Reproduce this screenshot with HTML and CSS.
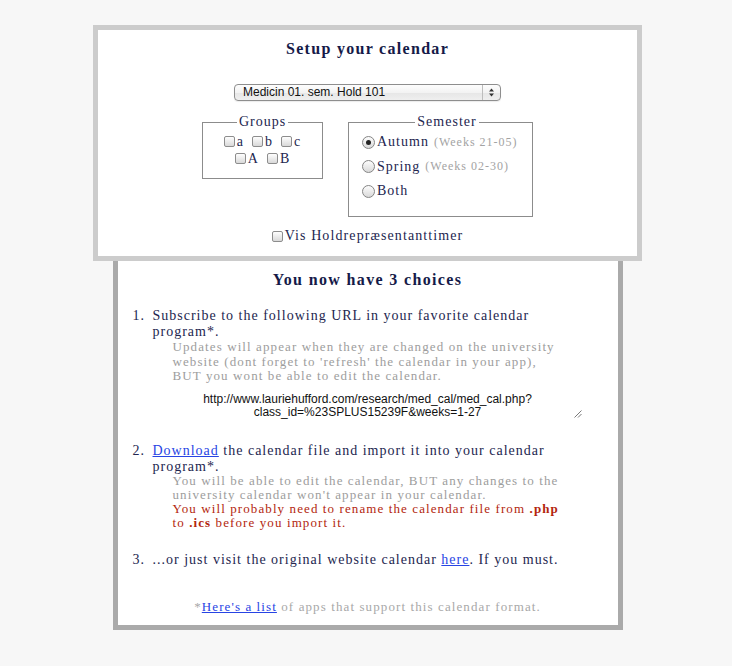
FILE: index.html
```html
<!DOCTYPE html>
<html>
<head>
<meta charset="utf-8">
<title>Setup your calendar</title>
<link rel="stylesheet" href="styles.css">
</head>
<body>
<div class="page">
  <section class="setup">
    <h1 class="setup-title">Setup your calendar</h1>
    <div class="select-row">
      <div class="select">
        <span class="select-text">Medicin 01. sem. Hold 101</span>
        <span class="select-arrows"><svg width="7" height="11" viewBox="0 0 7 11"><path d="M3.5 1.5 L6 4.5 H1 Z" fill="#333"/><path d="M3.5 9.5 L6 6.5 H1 Z" fill="#333"/></svg></span>
      </div>
    </div>
    <div class="fieldsets">
      <fieldset class="box groups">
        <legend>Groups</legend>
        <div class="group-row">
          <label class="opt"><span class="cb"></span>a</label>
          <label class="opt"><span class="cb"></span>b</label>
          <label class="opt"><span class="cb"></span>c</label>
        </div>
        <div class="group-row">
          <label class="opt"><span class="cb"></span>A</label>
          <label class="opt"><span class="cb"></span>B</label>
        </div>
      </fieldset>
      <fieldset class="box semester">
        <legend>Semester</legend>
        <label class="radio-row"><span class="rb rb-on"></span>Autumn<span class="weeks">(Weeks 21-05)</span></label>
        <label class="radio-row"><span class="rb"></span>Spring<span class="weeks">(Weeks 02-30)</span></label>
        <label class="radio-row"><span class="rb"></span>Both</label>
      </fieldset>
    </div>
    <div class="vis-row"><label class="opt"><span class="cb"></span>Vis Holdrepræsentanttimer</label></div>
  </section>
  <section class="choices">
    <h2 class="choices-title">You now have 3 choices</h2>
    <ol class="steps">
      <li class="step">
        <span class="num">1.</span>
        <div class="step-body">
          <p class="step-main">Subscribe to the following URL in your favorite calendar<br>program*.</p>
          <p class="note note-wide">Updates will appear when they are changed on the university<br>website (dont forget to 'refresh' the calendar in your app),<br>BUT you wont be able to edit the calendar.</p>
          <div class="url-box">http://www.lauriehufford.com/research/med_cal/med_cal.php?<br>class_id=%23SPLUS15239F&amp;weeks=1-27<svg class="grip" width="8" height="8" viewBox="0 0 8 8"><path d="M7.5 0.5 L0.5 7.5 M7.5 4 L4 7.5" stroke="#7a7a7a" stroke-width="1" fill="none"/></svg></div>
        </div>
      </li>
      <li class="step">
        <span class="num">2.</span>
        <div class="step-body">
          <p class="step-main"><a href="#">Download</a> the calendar file and import it into your calendar<br>program*.</p>
          <p class="note">You will be able to edit the calendar, BUT any changes to the<br>university calendar won't appear in your calendar.<br><span class="warn">You will probably need to rename the calendar file from <b>.php</b><br>to <b>.ics</b> before you import it.</span></p>
        </div>
      </li>
      <li class="step">
        <span class="num">3.</span>
        <div class="step-body">
          <p class="step-main">...or just visit the original website calendar <a href="#">here</a>. If you must.</p>
        </div>
      </li>
    </ol>
    <p class="footnote">*<a href="#">Here's a list</a> of apps that support this calendar format.</p>
  </section>
</div>
</body>
</html>
```
FILE: styles.css
```css
* {
  box-sizing: border-box;
}

body {
  margin: 0;
  background: #f7f7f7;
  font-family: "Liberation Serif", "Times New Roman", serif;
  color: #23264f;
}

a {
  color: #2744e4;
  text-decoration: underline;
}

.page {
  display: flex;
  flex-direction: column;
  align-items: center;
  padding: 25px 0 0 3px;
}

/* ---------- setup box ---------- */
.setup {
  width: 549px;
  border: 5px solid #cccccc;
  background: #ffffff;
  padding: 9px 0 12px;
  position: relative;
  z-index: 1;
}

.setup-title {
  margin: 0;
  font-size: 16px;
  line-height: 20px;
  font-weight: bold;
  letter-spacing: 1.3px;
  text-align: center;
  color: #151a48;
}

.select-row {
  display: flex;
  justify-content: center;
  margin-top: 25px;
}

.select {
  width: 267px;
  height: 17px;
  border: 1px solid #8e8e8e;
  border-radius: 4px;
  background: linear-gradient(#fdfdfd, #f3f3f3 50%, #e6e6e6 51%, #efefef);
  box-shadow: 0 1px 1px rgba(0, 0, 0, 0.08);
  display: flex;
  align-items: center;
  font-family: "Liberation Sans", Arial, sans-serif;
  font-size: 12px;
  color: #111;
}

.select-text {
  flex: 1;
  padding-left: 8px;
  line-height: 15px;
}

.select-arrows {
  width: 18px;
  height: 100%;
  border-left: 1px solid #bdbdbd;
  display: flex;
  align-items: center;
  justify-content: center;
}

.fieldsets {
  display: flex;
  justify-content: center;
  align-items: flex-start;
  gap: 25px;
  margin-top: 13px;
}

.box {
  margin: 0;
  border: 1px solid #8c8c8c;
  min-width: 0;
}

.box legend {
  margin: 0 auto;
  padding: 0 2px;
  font-size: 14px;
  line-height: 16px;
  letter-spacing: 1px;
  color: #23264f;
}

.groups {
  width: 121px;
  padding: 3px 0 11px;
}

.semester {
  width: 185px;
  padding: 0 0 12.5px 13px;
}

.group-row {
  display: flex;
  justify-content: center;
  gap: 8px;
  font-size: 14px;
  line-height: 17px;
  letter-spacing: 1px;
}

.opt {
  display: inline-flex;
  align-items: center;
}

.cb {
  flex: none;
  width: 11px;
  height: 11px;
  margin-right: 2px;
  border: 1px solid #8d8d8d;
  border-radius: 2px;
  background: linear-gradient(#fefefe, #d9d9d9);
}

.radio-row {
  display: flex;
  align-items: center;
  height: 24.5px;
  font-size: 14px;
  letter-spacing: 1px;
  white-space: nowrap;
}

.rb {
  flex: none;
  position: relative;
  width: 13px;
  height: 13px;
  margin-right: 2px;
  border: 1px solid #858585;
  border-radius: 50%;
  background: linear-gradient(#fdfdfd, #d9d9d9);
}

.rb-on::after {
  content: "";
  position: absolute;
  left: 3px;
  top: 3px;
  width: 5px;
  height: 5px;
  border-radius: 50%;
  background: #222;
}

.weeks {
  margin-left: 5px;
  font-size: 12px;
  letter-spacing: 1px;
  color: #a3a3a3;
}

.vis-row {
  display: flex;
  justify-content: center;
  margin-top: 11px;
  font-size: 14px;
  line-height: 16px;
  letter-spacing: 1.1px;
}

/* ---------- choices box ---------- */
.choices {
  width: 510px;
  border: 5px solid #aaaaaa;
  border-top: 0;
  background: #ffffff;
  padding: 9px 15px 10px;
}

.choices-title {
  margin: 0;
  font-size: 16px;
  line-height: 20px;
  font-weight: bold;
  letter-spacing: 1.35px;
  text-align: center;
  color: #151a48;
}

.steps {
  list-style: none;
  margin: 18px 0 0;
  padding: 0;
}

.step {
  display: flex;
  margin-bottom: 22px;
}

.num {
  flex: none;
  width: 20px;
  font-size: 14px;
  line-height: 16px;
  letter-spacing: 1px;
}

.step-body {
  flex: 1;
  min-width: 0;
}

.step-main {
  margin: 0;
  font-size: 14px;
  line-height: 16px;
  letter-spacing: 1px;
  white-space: nowrap;
}

.note {
  margin: -1px 0 0 20px;
  font-size: 13px;
  line-height: 14px;
  letter-spacing: 1.1px;
  color: #9d9d9d;
  white-space: nowrap;
}

.note-wide {
  margin-top: 0;
  line-height: 14.5px;
}

.warn {
  color: #b3260e;
}

.url-box {
  position: relative;
  width: 430px;
  margin-top: 7px;
  padding: 2px 0;
  text-align: center;
  font-family: "Liberation Sans", Arial, sans-serif;
  font-size: 12px;
  line-height: 13px;
  color: #111;
}

.grip {
  position: absolute;
  right: 1px;
  bottom: 3px;
}

.footnote {
  margin: 31px 0 0;
  text-align: center;
  font-size: 13px;
  line-height: 16px;
  letter-spacing: 1.1px;
  color: #a8a8a8;
}
```
